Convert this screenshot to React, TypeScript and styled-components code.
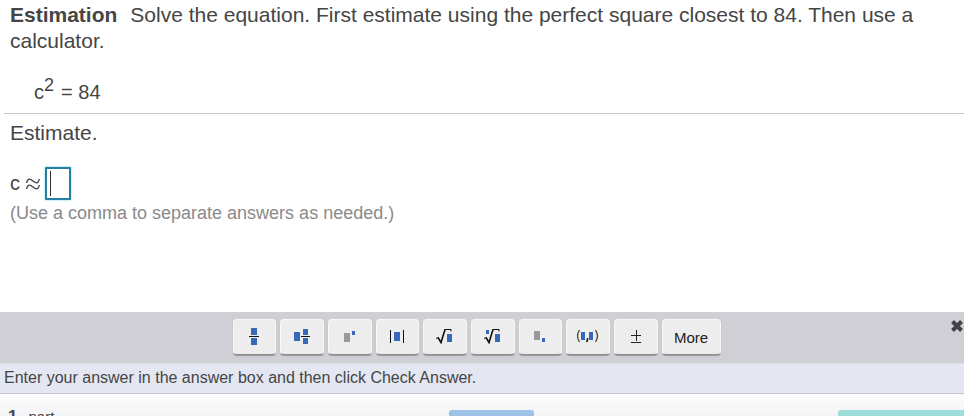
import React, { useEffect, useRef } from "react";
import styled, { createGlobalStyle } from "styled-components";

const Global = createGlobalStyle`
  * { box-sizing: border-box; }
  html, body { margin: 0; padding: 0; background: #fff; }
  html, body, #root { height: 100%; }
  body, button, input { font-family: "Liberation Sans", Arial, sans-serif; }
`;

const Page = styled.div`
  height: 100%;
  display: flex;
  flex-direction: column;
  overflow: hidden;
  color: #454545;
`;

const Exercise = styled.main`
  flex: 1;
  min-height: 0;
`;

const Problem = styled.section`
  margin-left: 4px;
  padding: 2px 30px 5px 6px;
  border-bottom: 1px solid #c9cccc;
`;

const Prompt = styled.p`
  margin: 0;
  font-size: 21px;
  line-height: 26px;
`;

const Topic = styled.strong`
  margin-right: 13px;
`;

const Equation = styled.div`
  display: flex;
  margin: 22px 0 0 24px;
  font-size: 20px;
  line-height: 32px;
`;

const Power = styled.sup`
  margin-right: 7px;
  font-size: 18px;
  line-height: 18px;
`;

const Answer = styled.section`
  padding: 6px 10px;
`;

const Field = styled.label`
  display: flex;
  align-items: center;
  margin-top: 20px;
  font-size: 20px;
  line-height: 34px;
`;

const Approx = styled.svg`
  margin: 2px 5px 0 6px;
`;

const AnswerBox = styled.input`
  width: 26px;
  height: 33px;
  padding: 0 4px;
  border: 2px solid #25809f;
  border-radius: 1px;
  outline: none;
  box-shadow: 0 0 2px #55c4e2;
  font-size: 20px;
  color: #454545;
  caret-color: transparent;
  background: linear-gradient(#333, #333) 3px 2px / 1px 25px no-repeat #fff;
`;

const Hint = styled.p`
  margin: 1px 0 0;
  font-size: 18px;
  line-height: 24px;
  color: #8a8a8a;
`;

const Palette = styled.div`
  display: grid;
  grid-template-columns: 1fr auto 1fr 11px;
  height: 51px;
  background: #cfcfd5;
`;

const Tools = styled.div`
  grid-column: 2;
  display: grid;
  grid-template-columns: repeat(9, 1fr) 59px;
  gap: 4px;
  width: 488px;
  padding-top: 7px;
`;

const ToolButton = styled.button`
  display: grid;
  place-items: center;
  height: 36px;
  padding: 0;
  border: 1px solid #f8f8f8;
  border-bottom-color: #8d8d91;
  border-radius: 4px;
  background: #ededee;
  box-shadow: 0 1px 1px #98989c;
  font-size: 15px;
  color: #222;
`;

const CloseButton = styled.button`
  grid-column: 3 / 5;
  justify-self: end;
  align-self: start;
  display: block;
  margin-top: 8px;
  padding: 0;
  border: 0;
  background: none;
  line-height: 0;
`;

const Instruction = styled.div`
  height: 31px;
  padding: 1px 4px 0;
  border-top: 1px solid #dcdde5;
  border-bottom: 1px solid #c6c7ce;
  background: #e4e7f1;
  font-size: 16px;
  line-height: 26px;
`;

const Footer = styled.footer`
  display: grid;
  grid-template-columns: 449fr 85fr 304fr 126fr;
  height: 22px;
  overflow: hidden;
  background: linear-gradient(#fcfcfd, #f4f4f6);
`;

const Parts = styled.div`
  display: flex;
  align-items: baseline;
  gap: 11px;
  padding: 13px 0 0 8px;
  font-size: 15px;
  line-height: 20px;
`;

const Count = styled.b`
  font-size: 17px;
`;

const FooterButton = styled.button<{ $tone: string; $column: number }>`
  grid-column: ${(p) => p.$column};
  height: 30px;
  margin-top: 16px;
  padding: 0;
  border: 0;
  border-radius: ${(p) => (p.$column === 4 ? "3px 0 0 3px" : "3px")};
  background: ${(p) => p.$tone};
`;

const blue = "#3869b9";
const gray = "#999";

const radical = (
  <>
    <path fill={blue} d="M14 9h5v8h-5z" />
    <path fill="none" stroke="#111" d="M3 13.500l2.500-1M11.500 4.500h6.500v2" />
    <path fill="none" stroke="#111" strokeWidth="1.600" d="M5 12.500l3 5 4-13" />
  </>
);

const tools = [
  { name: "Fraction", art: <><path fill={blue} d="M9 3h6v7H9zM9 13h6v7H9z" /><path stroke="#111" d="M7 11.500h10" /></> },
  { name: "Mixed number", art: <><path fill={blue} d="M4 7h6v9H4zM13 4h5v6h-5zM13 13h5v6h-5z" /><path stroke="#111" d="M11 11.500h9" /></> },
  { name: "Exponent", art: <><path fill={gray} d="M6 8h6v9H6z" /><path fill={blue} d="M14 6h3v4h-3z" /></> },
  { name: "Absolute value", art: <><path fill={blue} d="M9 7h6v9H9z" /><path stroke="#111" d="M5.500 5v13M18.500 5v13" /></> },
  { name: "Square root", art: radical },
  { name: "Nth root", art: <>{radical}<path fill={blue} d="M5 5h3v4H5z" /></> },
  { name: "Subscript", art: <><path fill={gray} d="M6 6h6v9H6z" /><path fill={blue} d="M14 13h3v4h-3z" /></> },
  { name: "Ordered pair", art: <><path fill={blue} d="M5 7h4v8H5zM13 7h4v8h-4z" /><path fill="none" stroke="#42381c" strokeWidth="1.200" d="M3.500 5q-4 6 0 12M19.500 5q4 6 0 12" /><path stroke="#111" strokeWidth="1.500" d="M11.500 13v2l-1 2" /></> },
  { name: "Plus or minus", art: <path fill="none" stroke="#222" d="M7 10.500h10M12.500 5v11M7 17.500h10" /> },
];

export default function App() {
  const answer = useRef<HTMLInputElement>(null);
  useEffect(() => answer.current?.focus(), []);

  return (
    <Page>
      <Global />
      <Exercise>
        <Problem>
          <Prompt>
            <Topic>Estimation</Topic>
            Solve the equation. First estimate using the perfect square closest to 84. Then use a calculator.
          </Prompt>
          <Equation>c<Power>2</Power>= 84</Equation>
        </Problem>
        <Answer>
          <Prompt>Estimate.</Prompt>
          <Field>
            c
            <Approx width="14" height="12" viewBox="0 0 14 12" role="img" aria-label="approximately equals">
              <path fill="none" stroke="#454545" strokeWidth="1.300" d="M.7 5C1.500 0 4 .5 7 3s5.500 3 6.300-2M.7 11C1.500 6 4 6.500 7 9s5.500 3 6.300-2" />
            </Approx>
            <AnswerBox ref={answer} type="text" />
          </Field>
          <Hint>(Use a comma to separate answers as needed.)</Hint>
        </Answer>
      </Exercise>
      <Palette>
        <Tools>
          {tools.map((tool) => (
            <ToolButton key={tool.name} type="button" aria-label={tool.name}>
              <svg width="24" height="24" viewBox="0 0 24 24">{tool.art}</svg>
            </ToolButton>
          ))}
          <ToolButton type="button">More</ToolButton>
        </Tools>
        <CloseButton type="button" aria-label="Close">
          <svg width="14" height="12" viewBox="0 0 14 12">
            <path stroke="#454047" strokeWidth="4" d="M2.500 1.500l9 9M11.500 1.500l-9 9" />
          </svg>
        </CloseButton>
      </Palette>
      <Instruction>Enter your answer in the answer box and then click Check Answer.</Instruction>
      <Footer>
        <Parts><Count>1</Count>part</Parts>
        <FooterButton type="button" aria-label="Clear all" $tone="#9fc3e8" $column={2} />
        <FooterButton type="button" aria-label="Check answer" $tone="#9fdddd" $column={4} />
      </Footer>
    </Page>
  );
}
